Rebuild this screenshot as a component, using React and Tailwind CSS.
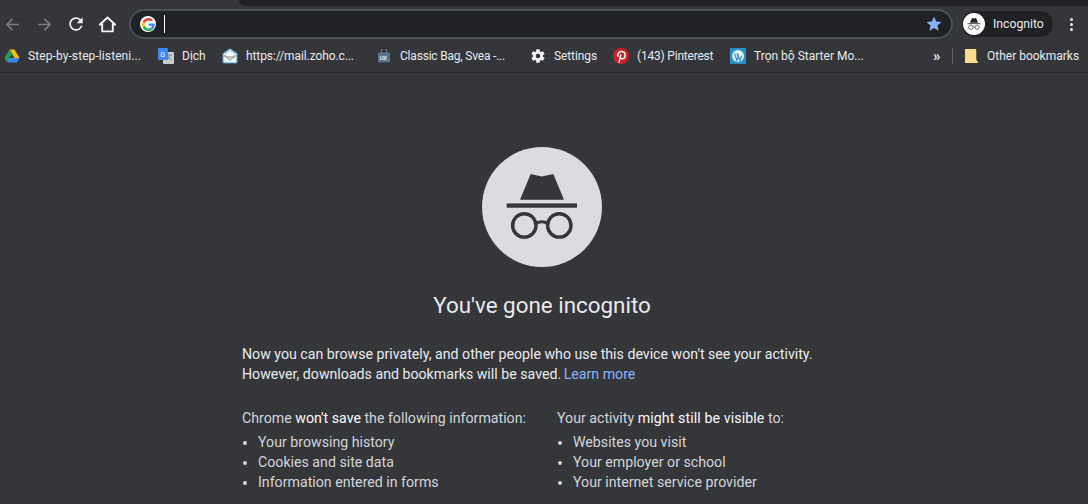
import React from "react";

const IncognitoGlyph = ({ className, fill = "#dadce0", ink = "#35363a" }) => (
  <svg viewBox="0 0 120 120" className={className}>
    <circle cx="60" cy="60" r="60" fill={fill} />
    <path d="M48.700 27 59.700 29.400 71.300 27 82 52.700H38z" fill={ink} />
    <rect x="24.700" y="56.400" width="70.300" height="4.300" fill={ink} />
    <circle cx="42.300" cy="78.400" r="11.700" fill="none" stroke={ink} strokeWidth="3.400" />
    <circle cx="77.300" cy="78.400" r="11.700" fill="none" stroke={ink} strokeWidth="3.400" />
    <path d="M53.500 76.500Q60 73 66 76.500" fill="none" stroke={ink} strokeWidth="3.200" />
  </svg>
);

const GoogleG = () => (
  <svg viewBox="0 0 48 48" className="h-[13px] w-[13px]">
    <path fill="#EA4335" d="M24 9.500c3.500 0 6.700 1.300 9.100 3.500l6.800-6.800C35.800 2.400 30.200 0 24 0 14.600 0 6.600 5.400 2.600 13.200l7.900 6.200C12.400 13.600 17.700 9.500 24 9.500z" />
    <path fill="#4285F4" d="M46.900 24.500c0-1.600-.1-3.100-.4-4.500H24v9h12.900c-.6 3-2.200 5.500-4.700 7.200l7.600 5.900c4.400-4.100 7.100-10.200 7.100-17.600z" />
    <path fill="#FBBC05" d="M10.500 28.600c-.5-1.400-.8-3-.8-4.600s.3-3.200.8-4.600l-7.900-6.200C.9 16.500 0 20.100 0 24s.9 7.500 2.600 10.800l7.900-6.200z" />
    <path fill="#34A853" d="M24 48c6.500 0 11.900-2.100 15.900-5.800l-7.600-5.900c-2.100 1.400-4.900 2.300-8.300 2.300-6.300 0-11.600-4.100-13.500-9.900l-7.900 6.200C6.600 42.600 14.600 48 24 48z" />
  </svg>
);

const Drive = () => (
  <svg viewBox="0 0 16 16" className="h-4 w-4">
    <path d="M5.500 1.500h5L15.500 10h-5z" fill="#fbbc04" />
    <path d="M5.500 1.500 .5 10 3 14.500 8 6z" fill="#1e9e57" />
    <path d="M3 14.500h10l2.500-4.500h-10z" fill="#4285f4" />
  </svg>
);
const Translate = () => (
  <svg viewBox="0 0 16 16" className="h-4 w-4">
    <rect x="5" y="4" width="11" height="12" rx="1" fill="#c9ccd1" />
    <rect width="10" height="12" rx="1" fill="#4285f4" />
    <text x="2.200" y="9" fontSize="7" fontFamily="Roboto" fill="#fff">G</text>
    <path d="M9 7h5M11.500 7c0 2-1 4-3 5M10 9c1 1.500 2 2.500 3.500 3" stroke="#70757a" fill="none" strokeWidth=".8" />
  </svg>
);
const Zoho = () => (
  <svg viewBox="0 0 16 16" className="h-4 w-4">
    <path d="M8 .8 15 5.500V14a1 1 0 0 1-1 1H2a1 1 0 0 1-1-1V5.500z" fill="#eaf4f9" stroke="#5b98bd" strokeWidth="1.100" />
    <path d="M3.500 5.500 8 2.800l4.500 2.700V8.500h-9z" fill="#fff" stroke="#7fb5d5" strokeWidth=".7" />
    <path d="M2 7.500 8 12l6-4.500" stroke="#5b98bd" strokeWidth="1" fill="none" />
    <path d="M4.500 8.500c2 1.300 5 1.300 7 0" stroke="#e8a33a" strokeWidth="1" fill="none" />
  </svg>
);
const UxBag = () => (
  <svg viewBox="0 0 16 16" className="h-[14px] w-[14px]">
    <path d="M5 4V2.500a3 3 0 0 1 6 0V4" stroke="#7d93ab" fill="none" />
    <path d="M1.500 4h13l.5 11H1z" fill="#5d7691" />
    <text x="3" y="12" fontSize="6.500" fontWeight="700" fontFamily="Roboto" fill="#dfe5ec">UX</text>
  </svg>
);
const Gear = () => (
  <svg viewBox="0 0 24 24" className="h-4 w-4" fill="#f1f3f4">
    <path d="M19.430 12.980c.04-.32.070-.64.070-.98s-.03-.66-.07-.98l2.110-1.650c.19-.15.240-.42.120-.64l-2-3.460c-.12-.22-.39-.3-.61-.22l-2.490 1c-.52-.4-1.080-.73-1.690-.98l-.38-2.650A.488.488 0 0 0 14 2h-4c-.25 0-.46.180-.49.420l-.38 2.650c-.61.250-1.170.59-1.690.98l-2.490-1c-.23-.09-.49 0-.61.220l-2 3.460c-.13.220-.07.490.12.640l2.110 1.650c-.04.320-.07.650-.07.980s.03.660.07.980l-2.110 1.650c-.19.150-.24.420-.12.640l2 3.460c.12.220.39.300.61.220l2.490-1c.52.400 1.080.730 1.690.980l.38 2.650c.03.240.24.420.49.420h4c.25 0 .46-.18.490-.42l.38-2.650c.61-.25 1.170-.59 1.690-.98l2.490 1c.23.090.49 0 .61-.22l2-3.460c.12-.22.070-.49-.12-.64l-2.110-1.650zM12 15.500a3.500 3.500 0 1 1 0-7 3.500 3.500 0 0 1 0 7z" />
  </svg>
);
const Pinterest = () => (
  <svg viewBox="0 0 16 16" className="h-4 w-4">
    <circle cx="8" cy="8" r="8" fill="#cb1f27" />
    <path d="M6 14.500 7.900 6.500M5.100 8.700C4 5.800 6 3.500 8.400 3.500c2.200 0 3.700 1.500 3.700 3.400 0 2.300-1.300 3.900-3 3.900-1 0-1.500-.6-1.800-1.100" stroke="#fff" strokeWidth="1.500" fill="none" />
  </svg>
);
const Wp = () => (
  <svg viewBox="0 0 16 16" className="h-4 w-4">
    <rect width="16" height="16" fill="#2b8fc4" />
    <circle cx="8" cy="8" r="6" fill="#dff0f8" />
    <path d="M4.500 5.500 7 12.500l1.200-3.500L7 5.500M7.500 5.500 10 12.500l1.800-5" stroke="#2b8fc4" strokeWidth="1.100" fill="none" />
  </svg>
);
const Folder = () => (
  <svg viewBox="0 0 13 14" className="h-[14px] w-[13px]">
    <path d="M0 0h10.500l.8 1v10l1.700 2v1H0z" fill="#f9dc8c" />
  </svg>
);

const Bookmark = ({ icon, label, className = "", labelClass = "" }) => (
  <div className={`flex shrink-0 items-center ${className}`}>
    <span className="flex w-4 shrink-0 items-center justify-center">{icon}</span>
    <span className={`ml-2 whitespace-nowrap ${labelClass}`}>{label}</span>
  </div>
);

export default function App() {
  return (
    <div className="flex h-[504px] w-[1088px] flex-col overflow-hidden bg-[#35363a] font-['Roboto',sans-serif] text-[#e8eaed]">
      <div className="h-[6px] bg-[#35363a]">
        <div className="ml-[239px] h-[6px] rounded-bl-lg bg-[#202124]" />
      </div>
      <div className="flex h-[36px] items-center">
        <div className="flex w-[129px] items-center pl-[5px]">
          <svg viewBox="0 0 16 16" className="h-[15px] w-[15px]" fill="none" stroke="#7b7d81" strokeWidth="1.700"><path d="M15 8H2M8 2 2 8l6 6" /></svg>
          <svg viewBox="0 0 16 16" className="ml-[17px] h-[15px] w-[15px]" fill="none" stroke="#7b7d81" strokeWidth="1.700"><path d="M1 8h13M8 2l6 6-6 6" /></svg>
          <svg viewBox="0 0 24 24" className="ml-[14px] h-5 w-5" fill="#f1f3f4"><path d="M17.650 6.350A7.958 7.958 0 0 0 12 4c-4.420 0-7.990 3.580-7.990 8s3.570 8 7.990 8c3.730 0 6.840-2.550 7.730-6h-2.080A5.990 5.990 0 0 1 12 18c-3.310 0-6-2.690-6-6s2.690-6 6-6c1.660 0 3.140.690 4.220 1.780L13 11h7V4l-2.350 2.350z" /></svg>
          <svg viewBox="0 0 16 16" className="ml-[13px] h-[17px] w-[17px]" fill="none" stroke="#f1f3f4" strokeWidth="1.800"><path d="M.8 8 8 1.500 15.200 8H13v6.500H3V8z" /></svg>
        </div>
        <div className="flex h-[30px] w-[824px] items-center rounded-full border-2 border-[#4a4f59] bg-[#202124] pl-[9px] pr-[8px]">
          <div className="flex h-4 w-4 shrink-0 items-center justify-center rounded-full bg-white"><GoogleG /></div>
          <div className="ml-[8px] h-[18px] w-px bg-white" />
          <svg viewBox="0 0 24 24" className="ml-auto h-[18px] w-[18px]" fill="#8ab4f8"><path d="M12 17.270 18.180 21l-1.640-7.030L22 9.240l-7.190-.61L12 2 9.190 8.630 2 9.240l5.460 4.730L5.820 21z" /></svg>
        </div>
        <div className="ml-[9px] flex h-[26px] w-[91px] shrink-0 items-center rounded-full bg-[#202124] pl-px">
          <IncognitoGlyph className="h-[22px] w-[22px]" fill="#ffffff" ink="#202124" />
          <span className="ml-[8px] text-[12.200px]">Incognito</span>
        </div>
        <div className="ml-[17px] flex flex-col gap-[2px]">
          <span className="h-[3px] w-[3px] rounded-full bg-[#e8eaed]" />
          <span className="h-[3px] w-[3px] rounded-full bg-[#e8eaed]" />
          <span className="h-[3px] w-[3px] rounded-full bg-[#e8eaed]" />
        </div>
      </div>
      <div className="flex h-[31px] items-center border-b border-[#2b2c2f] pb-[2px] pl-[4px] text-[12px]">
        <Bookmark className="w-[154px]" labelClass="tracking-[0.09px]" icon={<Drive />} label="Step-by-step-listeni..." />
        <Bookmark className="w-[64px]" icon={<Translate />} label="Dịch" />
        <Bookmark className="w-[154px]" labelClass="tracking-[-0.1px]" icon={<Zoho />} label="https://mail.zoho.c..." />
        <Bookmark className="w-[154px]" labelClass="tracking-[-0.2px]" icon={<UxBag />} label="Classic Bag, Svea -..." />
        <Bookmark className="w-[83px]" labelClass="tracking-[-0.1px]" icon={<Gear />} label="Settings" />
        <Bookmark className="w-[117px]" labelClass="tracking-[-0.2px]" icon={<Pinterest />} label="(143) Pinterest" />
        <Bookmark className="w-[203px]" icon={<Wp />} label="Trọn bộ Starter Mo..." />
        <span className="w-[19px] text-[15px] font-bold leading-none">»</span>
        <div className="h-[16px] w-px bg-[#5f6368]" />
        <Bookmark className="ml-[10px]" icon={<Folder />} label="Other bookmarks" />
      </div>
      <main className="flex flex-1 flex-col items-center pr-[4px] pt-[74px]">
        <IncognitoGlyph className="h-[120px] w-[120px] shrink-0" />
        <h1 className="mt-[24px] text-[22.400px] leading-[28px] text-[#e8eaed]">You've gone incognito</h1>
        <div className="mt-[25px] w-[600px] text-[14.180px] leading-[20px]">
          <p>
            Now you can browse privately, and other people who use this device won't see your activity.
            <br />
            However, downloads and bookmarks will be saved. <a className="-ml-px text-[#8ab4f8]">Learn more</a>
          </p>
          <div className="mt-[24px] flex text-[#d3d5d9]">
            <div className="w-[315px]">
              <p>Chrome <span className="text-[#f8f9fa]">won't save</span> the following information:</p>
              <ul className="mt-[4px] list-disc pl-[16px]"><li>Your browsing history</li><li>Cookies and site data</li><li>Information entered in forms</li></ul>
            </div>
            <div>
              <p>Your activity <span className="tracking-[0.1px] text-[#f8f9fa]">might still be visible</span> to:</p>
              <ul className="mt-[4px] list-disc pl-[16px]"><li>Websites you visit</li><li>Your employer or school</li><li>Your internet service provider</li></ul>
            </div>
          </div>
        </div>
      </main>
    </div>
  );
}
